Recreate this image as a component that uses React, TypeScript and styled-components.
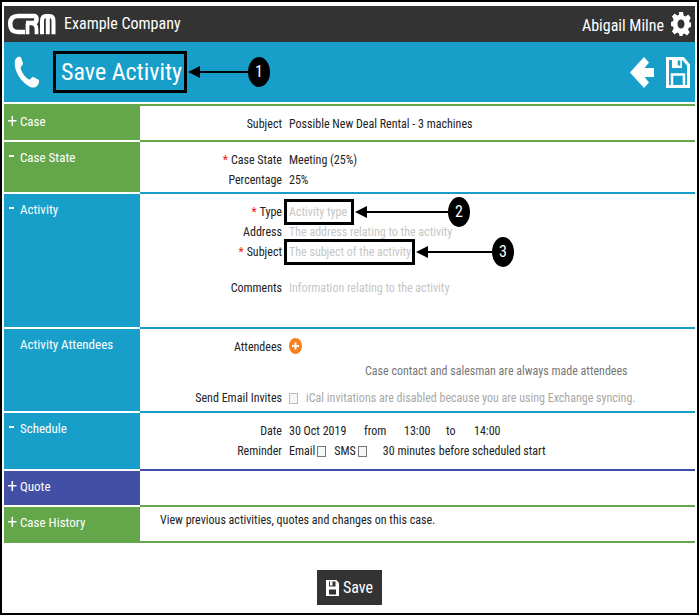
import React from 'react';
import styled, { createGlobalStyle } from 'styled-components';

const GREEN = '#64a74b';
const CYAN = '#179fca';
const INDIGO = '#4150a4';
const DARK = '#333333';
const FONT = '"Roboto Condensed", Roboto, "Liberation Sans", sans-serif';

const GlobalStyle = createGlobalStyle`
  *, *::before, *::after { box-sizing: border-box; }
  body { margin: 0; background: #fff; color: #222; font: 12px/20px ${FONT}; }
  button, input, textarea, select { font: inherit; color: inherit; }
  h1, h2, p { margin: 0; font-weight: 400; }
`;

const Page = styled.div`
  border: 2px solid #000;
  padding: 4px 2px 8px;
  min-height: 100vh;
`;

const TopBar = styled.header`
  display: flex;
  align-items: center;
  height: 36px;
  padding: 0 4px 0 3px;
  background: ${DARK};
  color: #fff;
  font-size: 16px;
`;

const Company = styled.span`
  margin-left: 8px;
  flex: 1;
`;

const IconButton = styled.button`
  display: flex;
  padding: 0;
  border: 0;
  background: none;
  color: #fff;
  cursor: pointer;
`;

const User = styled.span`
  margin: 3px 7px 0 0;
`;

const TitleBar = styled.div`
  display: flex;
  align-items: center;
  height: 60px;
  padding: 0 5px 0 10px;
  margin-bottom: 2px;
  background: ${CYAN};
  color: #fff;
`;

const Title = styled.h1`
  font-size: 24px;
  line-height: 36px;
`;

const Actions = styled.div`
  display: flex;
  align-items: center;
  gap: 12px;
  margin-left: auto;
`;

const TitleMark = styled.div`
  position: relative;
  margin-left: 13px;
  padding: 0 2px 0 5px;
  border: 3px solid #000;
`;

const Marked = styled.div`
  position: relative;
  display: flex;
  margin: -3px 0 -3px -5px;
  padding: 0 0 0 2px;
  border: 3px solid #000;
`;

const Callout = styled.div`
  position: absolute;
  top: 50%;
  left: calc(100% + 4px);
  display: flex;
  align-items: center;
  transform: translateY(-50%);
`;

const Badge = styled.span`
  width: 22px;
  height: 30px;
  border-radius: 50%;
  background: #000;
  color: #fff;
  font: 16px/30px ${FONT};
  text-align: center;
`;

const Section = styled.section<{ $line: string }>`
  display: grid;
  grid-template-columns: 136px 1fr;
  border-bottom: 2px solid ${p => p.$line};
`;

const Form = styled.form`
  border-top: 2px solid ${GREEN};
`;

const Side = styled.div<{ $color: string; $last?: boolean }>`
  display: flex;
  align-items: flex-start;
  padding: 6px 4px;
  margin-bottom: -2px;
  border-bottom: 2px solid ${p => (p.$last ? p.$color : '#fff')};
  background: ${p => p.$color};
  background-clip: padding-box;
  color: #fff;
  font-size: 13px;
`;

const Toggle = styled.button`
  width: 12px;
  height: 20px;
  padding: 0;
  border: 0;
  background: none;
  display: flex;
  cursor: pointer;
`;

const SideTitle = styled.h2<{ $indent?: boolean }>`
  font-size: 13px;
  line-height: 20px;
  margin-left: ${p => (p.$indent ? 12 : 0)}px;
`;

const Body = styled.div<{ $bottom: number }>`
  padding: 8px 0 ${p => p.$bottom}px;
`;

const Row = styled.div<{ $gap?: number }>`
  display: grid;
  grid-template-columns: 142px 1fr;
  column-gap: 7px;
  min-height: 20px;
  margin-top: ${p => p.$gap ?? 0}px;
`;

const Label = styled.label`
  text-align: right;
`;

const Required = styled.span`
  color: #f02020;
  margin-right: 3px;
`;

const Values = styled.div`
  display: flex;
  align-items: center;
  height: 20px;
`;

const Field = styled.input<{ $w: number }>`
  width: ${p => p.$w}px;
  height: 20px;
  padding: 0;
  border: 0;
  outline: 0;
  background: none;
  &::placeholder { color: #c6c6c6; opacity: 1; }
`;

const Picker = styled.select<{ $w: number }>`
  appearance: none;
  width: ${p => p.$w}px;
  height: 20px;
  padding: 0;
  border: 0;
  background: none;
`;

const Comments = styled.textarea`
  height: 40px;
  width: 90%;
  padding: 0;
  border: 0;
  resize: none;
  overflow: hidden;
  background: none;
  &::placeholder { color: #c6c6c6; opacity: 1; }
`;

const Check = styled.input<{ $after: number }>`
  appearance: none;
  width: 9px;
  height: 11px;
  margin: 0 ${p => p.$after}px 0 2px;
  border: 1px solid #777;
  background: #f6f6f6;
  &:checked { background: #555; }
  &:disabled { border-color: #bbb; margin-left: 0; }
`;

const Muted = styled.label`
  color: #a8a8a8;
  white-space: nowrap;
`;

const Note = styled.p`
  padding-left: 225px;
  margin-top: 4px;
  color: #777;
`;

const AddButton = styled(IconButton)`
  width: 13px;
  height: 16px;
  margin-bottom: 2px;
`;

const Word = styled.span<{ $w: number }>`
  width: ${p => p.$w}px;
  white-space: nowrap;
`;

const History = styled.p`
  padding: 3px 0 11px 20px;
`;

const Footer = styled.footer`
  display: flex;
  justify-content: center;
  padding-top: 27px;
`;

const SaveButton = styled.button`
  display: flex;
  align-items: center;
  gap: 4px;
  height: 35px;
  padding: 0 9px;
  border: 0;
  background: ${DARK};
  color: #fff;
  font-size: 16px;
  cursor: pointer;
`;

const Logo = () => (
  <svg width="49" height="22" viewBox="0 0 49 22" fill="none" stroke="#fff" strokeWidth="4.500" role="img" aria-label="CRM">
    <path d="M18 19H11Q3.200 19 3.200 11Q3.200 3 11 3H27Q29.500 3 29.500 6.500Q29.500 10 26 10H19" />
    <path d="M20.500 10.500V21.300M24 10Q29.500 11 29.500 16V21.300" strokeWidth="3.800" />
    <path d="M35 21.300V8Q35 3 39 3H42.500Q46.500 3 46.500 8V21.300M40.800 3V21.300" strokeWidth="4" />
  </svg>
);

const Gear = () => (
  <svg width="20" height="24" viewBox="0 0 20 24" fill="#fff" fillRule="evenodd">
    <path d="M8 0h4l.6 3.500 1.900 1 2.700-2 2.600 3.200-1.700 3.200.7 1.600H20v4.500l-2.200.7-.7 1.800 1.500 3-2.700 3-2.500-2-1.700.9L11.500 24h-3L8 21.400l-1.800-.9-2.600 2-2.600-3 1.600-3-.7-1.900L0 14v-4l1.900-.7.7-1.900L1 4.500l2.600-3 2.700 2 1.700-.8zM10 7.500c-2 0-3.500 2-3.500 4.500s1.500 4.500 3.500 4.500 3.500-2 3.500-4.500-1.500-4.500-3.500-4.500z" />
  </svg>
);

const Phone = () => (
  <svg width="26" height="32" viewBox="0 0 26 32" fill="#fff">
    <path d="M2 2.500C3.500.5 6 0 7 1.500l2 6c.4 1.500-2.500 3-2.500 4.500 1.500 5.500 5 9.500 8.500 11.500 1.500.5 2.500-3 4.500-2.500l4.500 2.500c2 1 1 4-1 6.500-2.500 2.500-6 2-10-1C7 25 1.500 17 .8 9 .6 6 .9 4 2 2.500z" />
  </svg>
);

const BackArrow = () => (
  <svg width="24" height="31" viewBox="0 0 24 31" fill="#fff">
    <path d="M0 15.500 14 0l5 5.500-4.500 5.500H24v9h-9.500l4.500 5.500-5 5.500z" />
  </svg>
);

const Floppy = () => (
  <svg width="24" height="31" viewBox="0 0 24 31" fill="none" stroke="#fff" strokeWidth="3">
    <path d="M1.500 1.500H17L22.500 8V29.500H1.500z" />
    <path d="M6 29V17.500H18V29" strokeWidth="2.500" />
    <path d="M6 2h10v9H6z" fill="#fff" stroke="none" />
    <path d="M13 3.500v5" stroke={CYAN} strokeWidth="2.500" />
  </svg>
);

const SmallFloppy = () => (
  <svg width="13" height="16" viewBox="0 0 13 16" fillRule="evenodd">
    <path fill="#fff" d="M0 0H10.500L13 3V16H0zM3 1.500V6.500H9.500V1.500zM3 9.500V14.500H10V9.500z" />
    <path fill="#fff" d="M4 1.500h2.500v4H4z" />
  </svg>
);

const Plus = () => (
  <svg width="9" height="20" viewBox="0 0 9 20" stroke="#fff" strokeWidth="1.500"><path d="M0 8.700H8.500M4.300 4V14" /></svg>
);
const Minus = () => (
  <svg width="9" height="20" viewBox="0 0 9 20" stroke="#fff" strokeWidth="2"><path d="M1 8H6" /></svg>
);

const Add = () => (
  <svg width="13" height="16" viewBox="0 0 13 16">
    <ellipse cx="6.500" cy="8" rx="6.500" ry="8" fill="#f5821f" />
    <path d="M3 8h7M6.500 4.500v7" stroke="#fff" strokeWidth="2" />
  </svg>
);

const Pointer = ({ n, length }: { n: number; length: number }) => (
  <Callout>
    <svg width={length} height="12" viewBox={`0 0 ${length} 12`}>
      <path d={`M10 6H${length}`} stroke="#000" strokeWidth="2" />
      <path d="M0 6 12 0V12z" fill="#000" />
    </svg>
    <Badge>{n}</Badge>
  </Callout>
);

type PanelProps = {
  title: string;
  color: string;
  line: string;
  toggle?: 'open' | 'closed';
  bottom: number;
  children?: React.ReactNode;
};

const Panel = ({ title, color, line, toggle, bottom, children }: PanelProps) => (
  <Section $line={line}>
    <Side $color={color}>
      {toggle && (
        <Toggle type="button" aria-label={`Toggle ${title}`} aria-expanded={toggle === 'open'}>
          {toggle === 'open' ? <Minus /> : <Plus />}
        </Toggle>
      )}
      <SideTitle $indent={!toggle}>{title}</SideTitle>
    </Side>
    <Body $bottom={bottom}>{children}</Body>
  </Section>
);

export default function App() {
  return (
    <Page>
      <GlobalStyle />
      <TopBar>
        <Logo />
        <Company>Example Company</Company>
        <User>Abigail Milne</User>
        <IconButton aria-label="Settings"><Gear /></IconButton>
      </TopBar>
      <TitleBar>
        <Phone />
        <TitleMark>
          <Title>Save Activity</Title>
          <Pointer n={1} length={60} />
        </TitleMark>
        <Actions>
          <IconButton aria-label="Back"><BackArrow /></IconButton>
          <IconButton aria-label="Save activity"><Floppy /></IconButton>
        </Actions>
      </TitleBar>
      <Form onSubmit={e => e.preventDefault()}>
        <Panel title="Case" color={GREEN} line={GREEN} toggle="closed" bottom={6}>
          <Row>
            <Label htmlFor="case-subject">Subject</Label>
            <Field id="case-subject" $w={300} defaultValue="Possible New Deal Rental - 3 machines" />
          </Row>
        </Panel>
        <Panel title="Case State" color={GREEN} line={CYAN} toggle="open" bottom={2}>
          <Row>
            <Label htmlFor="state"><Required>*</Required>Case State</Label>
            <Picker id="state" $w={120}><option>Meeting (25%)</option></Picker>
          </Row>
          <Row>
            <Label htmlFor="percentage">Percentage</Label>
            <Field id="percentage" $w={60} defaultValue="25%" />
          </Row>
        </Panel>
        <Panel title="Activity" color={CYAN} line={CYAN} toggle="open" bottom={9}>
          <Row>
            <Label htmlFor="type"><Required>*</Required>Type</Label>
            <Values>
              <Marked>
                <Field id="type" $w={62} placeholder="Activity type" />
                <Pointer n={2} length={93} />
              </Marked>
            </Values>
          </Row>
          <Row>
            <Label htmlFor="address">Address</Label>
            <Field id="address" $w={300} placeholder="The address relating to the activity" />
          </Row>
          <Row>
            <Label htmlFor="subject"><Required>*</Required>Subject</Label>
            <Values>
              <Marked>
                <Field id="subject" $w={123} placeholder="The subject of the activity" />
                <Pointer n={3} length={76} />
              </Marked>
            </Values>
          </Row>
          <Row $gap={16}>
            <Label htmlFor="comments">Comments</Label>
            <Comments id="comments" placeholder="Information relating to the activity" />
          </Row>
        </Panel>
        <Panel title="Activity Attendees" color={CYAN} line={CYAN} bottom={3}>
          <Row>
            <Label as="span">Attendees</Label>
            <Values><AddButton type="button" aria-label="Add attendee"><Add /></AddButton></Values>
          </Row>
          <Note>Case contact and salesman are always made attendees</Note>
          <Row $gap={7}>
            <Label as="span">Send Email Invites</Label>
            <Values>
              <Check id="invites" type="checkbox" disabled $after={8} />
              <Muted htmlFor="invites">iCal invitations are disabled because you are using Exchange syncing.</Muted>
            </Values>
          </Row>
        </Panel>
        <Panel title="Schedule" color={CYAN} line={INDIGO} toggle="open" bottom={8}>
          <Row>
            <Label htmlFor="date">Date</Label>
            <Values>
              <Field id="date" $w={75} defaultValue="30 Oct 2019" />
              <Word $w={40}>from</Word>
              <Picker aria-label="Start time" $w={42}><option>13:00</option></Picker>
              <Word $w={28}>to</Word>
              <Picker aria-label="End time" $w={42}><option>14:00</option></Picker>
            </Values>
          </Row>
          <Row>
            <Label as="span">Reminder</Label>
            <Values>
              <label htmlFor="by-email">Email</label>
              <Check id="by-email" type="checkbox" $after={8} />
              <label htmlFor="by-sms">SMS</label>
              <Check id="by-sms" type="checkbox" $after={16} />
              <Picker aria-label="Reminder lead time" $w={56}><option>30 minutes</option></Picker>
              <span>before scheduled start</span>
            </Values>
          </Row>
        </Panel>
        <Panel title="Quote" color={INDIGO} line={GREEN} toggle="closed" bottom={26} />
        <Section $line={GREEN}>
          <Side $color={GREEN} $last>
            <Toggle type="button" aria-label="Toggle Case History" aria-expanded={false}><Plus /></Toggle>
            <SideTitle>Case History</SideTitle>
          </Side>
          <History>View previous activities, quotes and changes on this case.</History>
        </Section>
        <Footer>
          <SaveButton type="submit"><SmallFloppy />Save</SaveButton>
        </Footer>
      </Form>
    </Page>
  );
}
